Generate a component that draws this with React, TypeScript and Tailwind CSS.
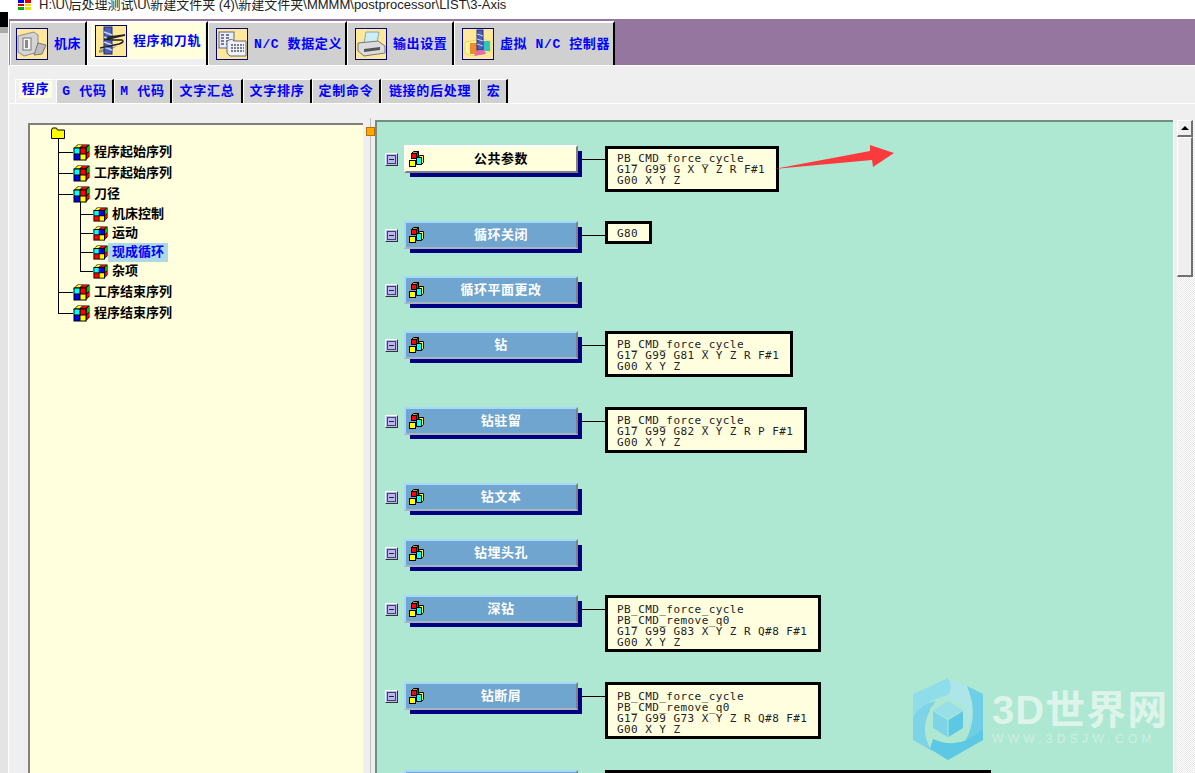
const cjk = "font-['Liberation_Mono','Noto_Sans_CJK_SC',monospace] font-bold text-[13px] leading-none"

const mainTabs = [
  { label: '机床', w: 'w-[77px]', pl: 'pl-[5px]', icon: 'machine' },
  { label: '程序和刀轨', w: 'w-[121px]', pl: 'pl-[3px]', icon: 'tool', active: true },
  { label: 'N/C 数据定义', w: 'w-[139px]', pl: 'pl-[7px]', icon: 'data' },
  { label: '输出设置', w: 'w-[107px]', pl: 'pl-[7px]', icon: 'printer' },
  { label: '虚拟 N/C 控制器', w: 'w-[161px]', pl: 'pl-[7px]', icon: 'sim' },
]

const subTabs = [
  { label: '程序', w: 'w-[41px]', active: true },
  { label: 'G 代码', w: 'w-[58px]' },
  { label: 'M 代码', w: 'w-[58px]' },
  { label: '文字汇总', w: 'w-[71px]' },
  { label: '文字排序', w: 'w-[69px]' },
  { label: '定制命令', w: 'w-[69px]' },
  { label: '链接的后处理', w: 'w-[99px]' },
  { label: '宏', w: 'w-[28px]' },
]

const rows = [
  { label: '公共参数', h: 'h-[76px]', light: true, box: 'mt-px pt-[4px] pb-[3px]', code: ['PB_CMD_force_cycle', 'G17 G99 G X Y Z R F#1', 'G00 X Y Z'] },
  { label: '循环关闭', h: 'h-[55px]', box: 'pt-[4px] pb-[2px]', code: ['G80'] },
  { label: '循环平面更改', h: 'h-[55px]' },
  { label: '钻', h: 'h-[76px]', box: 'pt-[5px] pb-[2px]', code: ['PB_CMD_force_cycle', 'G17 G99 G81 X Y Z R F#1', 'G00 X Y Z'] },
  { label: '钻驻留', h: 'h-[76px]', box: 'pt-[5px] pb-[2px]', code: ['PB_CMD_force_cycle', 'G17 G99 G82 X Y Z R P F#1', 'G00 X Y Z'] },
  { label: '钻文本', h: 'h-[56px]' },
  { label: '钻埋头孔', h: 'h-[56px]' },
  { label: '深钻', h: 'h-[87px]', box: 'pt-[6px] pb-px', code: ['PB_CMD_force_cycle', 'PB_CMD_remove_q0', 'G17 G99 G83 X Y Z R Q#8 F#1', 'G00 X Y Z'] },
  { label: '钻断屑', h: 'h-[88px]', box: 'pt-[6px] pb-px', code: ['PB_CMD_force_cycle', 'PB_CMD_remove_q0', 'G17 G99 G73 X Y Z R Q#8 F#1', 'G00 X Y Z'] },
  { label: '镗', h: 'h-[60px]', box: 'pt-[6px] pb-px', code: ['PB_CMD_force_cycle', 'PB_CMD_remove_q0', 'G17 G99 G85 X Y Z R Q#8 F#1 G00 X Y Z PB_CMD_remove'] },
]

function TabIcon({ kind }: { kind: string }) {
  return (
    <svg width="32" height="32" viewBox="0 0 32 32" className="shrink-0">
      <rect x="0.5" y="0.5" width="31" height="31" fill="#ffe89a" stroke="#000080" />
      {kind === 'machine' && (
        <g>
          <path d="M2 8 L18 4 L22 7 V24 L8 28 L2 24Z" fill="#d4d4d4" stroke="#8c8c8c" />
          <rect x="7" y="10" width="8" height="12" fill="#f4f4f4" stroke="#777" />
          <rect x="9" y="12" width="3" height="8" fill="#8a8a8a" />
          <path d="M22 15 L30 17 L26 26 L18 27Z" fill="#bdbdbd" stroke="#777" />
        </g>
      )}
      {kind === 'tool' && (
        <g>
          <path d="M4 25 L22 21 L14 26 L4 28Z" fill="#9a9a78" />
          <rect x="9" y="2" width="8" height="27" fill="#4d5ec0" stroke="#1d2b6b" />
          <path d="M9 7 L17 10 M9 12 L17 15 M9 17 L17 20 M9 22 L17 25" stroke="#c8d0f0" strokeWidth="1.5" />
          <path d="M9 15 L30 10" stroke="#222" strokeWidth="1.5" fill="none" />
          <path d="M30 10 L14 12 Q10 14 16 15 L27 15 Q30 17 24 19 L5 23" stroke="#222" strokeWidth="1.5" fill="none" />
        </g>
      )}
      {kind === 'data' && (
        <g>
          <rect x="3" y="4" width="15" height="16" fill="#e8eefc" stroke="#667" />
          <path d="M5 7h3M10 7h3M5 10h3M10 10h3M5 13h3M10 13h3M5 16h3M10 16h3" stroke="#556" strokeWidth="1.5" />
          <path d="M11 13 Q16 10 18 13 L30 13 V28 L14 28 Q11 26 11 24Z" fill="#f0f2fa" stroke="#667" />
          <path d="M15 17h13M15 20h13M15 23h13" stroke="#556" strokeWidth="1.5" strokeDasharray="2 1" />
        </g>
      )}
      {kind === 'printer' && (
        <g>
          <path d="M11 4 L24 4 L22 15 L9 15Z" fill="#cdeef4" stroke="#8aa" />
          <path d="M3 15 L23 13 L30 18 V25 L9 28 L3 23Z" fill="#dcdcdc" stroke="#777" />
          <path d="M9 21 L25 19 V22 L9 24Z" fill="#555" />
        </g>
      )}
      {kind === 'sim' && (
        <g>
          <path d="M3 14 L22 11 L29 14 V23 L10 28 L3 25Z" fill="#fff59a" stroke="#e8d860" />
          <rect x="20" y="13" width="8" height="10" fill="#30c4c0" />
          <rect x="8" y="15" width="8" height="11" fill="#f08a30" />
          <rect x="15" y="2" width="6" height="20" fill="#4d5ec0" stroke="#23307c" />
          <path d="M15 6 L21 8 M15 11 L21 13 M15 16 L21 18" stroke="#c8d0f0" />
          <path d="M14 23 L22 22 L24 26 L12 28Z" fill="#e868b0" />
        </g>
      )}
    </svg>
  )
}

function RubikIcon({ small }: { small?: boolean }) {
  const c = small
    ? ['#00ffff', '#0000ff', '#ff0000', '#ffff00']
    : ['#00ffff', '#ff0000', '#0000ff', '#ffff00']
  return (
    <svg width={small ? 15 : 17} height={small ? 15 : 17} viewBox="0 0 17 17" className="shrink-0">
      <path d="M0.5 4.5 L4.5 0.5 H16.5 V12.5 L12.5 16.5" fill="#000" />
      <path d="M2 3.5 L5 1 H9 L6.5 3.5Z" fill="#ffff00" />
      <path d="M7.5 3.5 L10 1 H15 L12.5 3.5Z" fill="#ff0000" />
      <path d="M13.5 4 L16 1.5 V7 L13.5 9Z" fill="#00c000" />
      <path d="M13.5 10 L16 8 V12 L13.5 15Z" fill="#ff0000" />
      <rect x="0.5" y="3.5" width="13" height="13" fill="#000" />
      <rect x="1.5" y="4.5" width="5" height="5" fill={c[0]} />
      <rect x="7.5" y="4.5" width="5" height="5" fill={c[1]} />
      <rect x="1.5" y="10.5" width="5" height="5" fill={c[2]} />
      <rect x="7.5" y="10.5" width="5" height="5" fill={c[3]} />
    </svg>
  )
}

function CubesIcon() {
  return (
    <svg width="16" height="16" viewBox="0 0 16 16" className="shrink-0">
      <path d="M3.5 2.5 L5.5 0.5 H10.5 L8.5 2.5Z" fill="#c8a000" stroke="#000" />
      <path d="M8.5 2.5 L10.5 0.5 V5.5 L8.5 7.5Z" fill="#008000" stroke="#000" />
      <rect x="3.5" y="2.5" width="5" height="5" fill="#ff0000" stroke="#000" />
      <path d="M8.5 6.5 H13.5 V13.5 H8.5Z" fill="#00ffff" stroke="#000" />
      <path d="M10.5 6.5 L11.5 4.5 H15.5 V11.5 L13.5 13.5 V6.5Z" fill="#ffff00" stroke="#000" />
      <rect x="1.5" y="9.5" width="6" height="6" fill="#ffff00" stroke="#000" />
    </svg>
  )
}

function TreeRow({ label, small, selected }: { label: string; small?: boolean; selected?: boolean }) {
  return (
    <li className={small ? 'flex items-center h-[19px]' : 'flex items-center h-[21px]'}>
      <div className={small ? 'w-[13px] h-px bg-black' : 'w-[15px] h-px bg-black'} />
      <RubikIcon small={small} />
      <span
        className={
          selected
            ? `${cjk} px-[4px] h-[19px] flex items-center bg-[#add8e6] text-[#0000ff]`
            : `${cjk} ml-[4px] text-black`
        }
      >
        {label}
      </span>
    </li>
  )
}

function Tree() {
  return (
    <div className="relative ml-[21px] pt-[2px]">
      <svg width="14" height="12" viewBox="0 0 14 12" className="block">
        <path d="M0.5 3 L1.5 1 H5.5 L6.5 3 H13.5 V11.5 H0.5Z" fill="#ffff00" stroke="#000" />
      </svg>
      <div className="absolute left-[7px] top-[13px] h-[175px] w-px bg-black" />
      <ul className="ml-[7px] pt-[3px]">
        <TreeRow label="程序起始序列" />
        <TreeRow label="工序起始序列" />
        <TreeRow label="刀径" />
        <li className="relative ml-[22px] pb-px">
          <div className="absolute left-0 top-[-3px] h-[69px] w-px bg-black" />
          <ul>
            <TreeRow small label="机床控制" />
            <TreeRow small label="运动" />
            <TreeRow small selected label="现成循环" />
            <TreeRow small label="杂项" />
          </ul>
        </li>
        <TreeRow label="工序结束序列" />
        <TreeRow label="程序结束序列" />
      </ul>
    </div>
  )
}

function Row({ row }: { row: (typeof rows)[number] }) {
  return (
    <div className={`flex items-start pl-[8px] ${row.h}`}>
      <div className="mt-[8px] mr-[6px] w-[13px] h-[13px] flex items-center justify-center bg-[#b8b8ec] border border-t-white border-l-white border-r-[#333] border-b-[#333] shrink-0">
        <div className="w-[9px] h-[9px] flex items-center justify-center border border-[#404060]">
          <div className="w-[5px] h-px bg-[#202040]" />
        </div>
      </div>
      <div className="relative w-[174px] h-[28px] shrink-0">
        <div className="absolute left-[6px] top-[6px] right-[-4px] bottom-[-4px] bg-[#000080]" />
        <div
          className={
            row.light
              ? 'relative h-full flex items-center pl-[2px] bg-[#ffffdd] border-2 border-t-white border-l-white border-r-[#808080] border-b-[#808080]'
              : 'relative h-full flex items-center pl-[2px] bg-[#6fa5cf] border-2 border-t-[#a6d8f8] border-l-[#a6d8f8] border-r-[#808080] border-b-[#a9b4bc]'
          }
        >
          <CubesIcon />
          <span className={`flex-1 pl-[2px] text-center tracking-[0.5px] ${cjk} ${row.light ? 'text-black' : 'text-white'}`}>
            {row.label}
          </span>
        </div>
      </div>
      {row.code && (
        <>
          <div className="mt-[14px] ml-[4px] w-[23px] h-px bg-black shrink-0" />
          <div className={`${row.box} bg-[#ffffe0] border-[3px] border-black pl-[9px] pr-[11px] font-['DejaVu_Sans_Mono',monospace] text-[11px] tracking-[0.43px] leading-[11px] text-[#222] whitespace-pre shrink-0`}>
            {row.code.map((line, i) => (
              <div key={i}>{line}</div>
            ))}
          </div>
        </>
      )}
    </div>
  )
}

function Watermark() {
  return (
    <div className="absolute left-[912px] top-[677px] flex items-start pointer-events-none">
      <svg width="72" height="84" viewBox="0 0 72 84">
        <path d="M36 1 L54 9 Q66 30 55 52 Q48 20 20 16 Q24 8 36 1Z" fill="#ade5e8" />
        <path d="M36 1 L1 17 V50 Q4 26 36 18 Q42 10 36 1Z" fill="#8fdde8" />
        <path d="M55 9 L71 17 V63 L52 66 Q68 40 55 9Z" fill="#6ccfe6" />
        <path d="M1 20 V63 L20 74 Q4 50 24 24 Q10 26 1 40Z" fill="#7cd4e6" />
        <path d="M21 62 Q48 74 71 52 V63 L36 83 L18 72Z" fill="#5cc8e4" />
        <path d="M36 20 L54 31 V53 L36 64 L18 53 V31Z" fill="#aee8d2" />
        <path d="M36 24 L51 33 L36 42 L21 33Z" fill="#98dfe8" />
        <path d="M21 34 L35.5 43 V60 L21 51Z" fill="#7cd4e6" />
        <path d="M36.5 43 L51 34 V51 L36.5 60Z" fill="#5cc8e4" />
      </svg>
      <div className="ml-[8px] mt-[10px] flex flex-col font-['Liberation_Sans','Noto_Sans_CJK_SC',sans-serif] font-bold">
        <span className="text-[40px] leading-[46px] text-[#dcf4ea] tracking-[1px] whitespace-nowrap">3D世界网</span>
        <span className="text-[12px] leading-[12px] text-[#cdf0e2] tracking-[4.3px] whitespace-nowrap font-normal">WWW.3DSJW.COM</span>
      </div>
    </div>
  )
}

export default function App() {
  return (
    <div className="relative w-[1195px] h-[773px] overflow-hidden flex bg-[#efefef]">
      <div className="w-[9px] shrink-0 flex flex-col bg-[#e4e4e4] border-r border-white">
        <div className="h-[12px] bg-white" />
        <div className="h-[15px] bg-black" />
        <div className="h-[6px] bg-[#a8a8a8]" />
      </div>

      <div className="flex-1 flex flex-col min-w-0">
        <div className="h-[19px] shrink-0 bg-white flex items-start pl-[9px] overflow-hidden">
          <div className="w-[13px] h-[10px] grid grid-cols-2 gap-px shrink-0">
            <div className="bg-[#0000e0]" />
            <div className="bg-[#e00000]" />
            <div className="bg-[#e00000]" />
            <div className="bg-[#e8e000]" />
            <div className="bg-[#00b000]" />
            <div className="bg-[#e8e000]" />
          </div>
          <span className="ml-[8px] -mt-[3px] font-['Liberation_Sans','Noto_Sans_CJK_SC',sans-serif] text-[13px] leading-[16px] text-[#222] whitespace-nowrap">
            H:\U\后处理测试\U\新建文件夹 (4)\新建文件夹\MMMM\postprocessor\LIST\3-Axis
          </span>
        </div>

        <div className="h-[46px] shrink-0 bg-[#94769f] flex items-end pl-px">
          {mainTabs.map((tab) => (
            <div
              key={tab.label}
              className={`${tab.w} ${tab.pl} h-[44px] flex items-center border-t-2 border-l border-r-2 border-t-white border-l-white border-r-black ${tab.active ? 'bg-[#efefef]' : 'bg-[#d0d0d0]'}`}
            >
              {tab.active ? (
                <div className="flex items-center gap-[6px] bg-[#ffffdd] h-[36px] pl-[4px] w-[114px] -mt-[6px]">
                  <TabIcon kind={tab.icon} />
                  <span className={`${cjk} text-[#0000ff] tracking-[0.6px] whitespace-nowrap`}>{tab.label}</span>
                </div>
              ) : (
                <div className="flex items-center gap-[6px]">
                  <TabIcon kind={tab.icon} />
                  <span className={`${cjk} text-[#0000ff] tracking-[0.6px] whitespace-nowrap`}>{tab.label}</span>
                </div>
              )}
            </div>
          ))}
        </div>

        <div className="h-px shrink-0 bg-white" />

        <div className="shrink-0 flex items-end pl-[6px] pt-[14px] h-[38px] border-b border-white">
          {subTabs.map((tab) => (
            <div
              key={tab.label}
              className={`${tab.w} h-[24px] flex items-center justify-center border-t border-l border-r-2 border-t-white border-l-white ${tab.active ? 'bg-[#efefef] border-r-[#efefef]' : 'bg-[#d0d0d0] border-r-black'}`}
            >
              <span className={`${cjk} text-[#0000ff] tracking-[0.7px] whitespace-nowrap ${tab.active ? 'bg-[#ffffdd] px-[3px] py-[2px] -mt-[4px] ml-px' : ''}`}>
                {tab.label}
              </span>
            </div>
          ))}
        </div>

        <div className="flex-1 min-h-0 flex items-stretch pt-[16px] overflow-hidden">
          <div className="ml-[19px] mt-[3px] w-[335px] shrink-0 bg-[#ffffdd] border-t-2 border-l-2 border-t-[#808080] border-l-[#808080]">
            <Tree />
          </div>
          <div className="relative w-[12px] shrink-0 -mt-[2px]">
            <div className="absolute left-[7px] top-0 bottom-0 w-px bg-[#bdbdbd]" />
            <div className="absolute left-[3px] top-[9px] w-[9px] h-[9px] bg-[#ffa500] border border-[#b87000]" />
          </div>
          <div className="w-[798px] shrink-0 bg-[#aee8d2] border-t-2 border-l-2 border-t-[#6f8f85] border-l-[#6f8f85] pt-[23px] overflow-hidden">
            {rows.map((row) => (
              <Row key={row.label} row={row} />
            ))}
          </div>
          <div className="w-px shrink-0 bg-white" />
          <div className="w-[3px] shrink-0" />
          <div className="w-[18px] shrink-0 flex flex-col bg-[repeating-conic-gradient(#e8e8e8_0_25%,#ffffff_0_50%)] bg-[length:2px_2px]">
            <div className="w-[16px] h-[17px] bg-[#efefef] border-t border-l border-r-2 border-b-2 border-t-white border-l-white border-r-[#707070] border-b-[#707070] flex items-center justify-center">
              <div className="w-0 h-0 border-l-[4px] border-r-[4px] border-b-[4px] border-l-transparent border-r-transparent border-b-black" />
            </div>
            <div className="w-[16px] h-[140px] bg-[#efefef] border-t border-l border-r-2 border-b-2 border-t-white border-l-white border-r-[#707070] border-b-[#707070]" />
          </div>
        </div>
      </div>

      <svg width="130" height="35" viewBox="0 0 130 35" className="absolute left-[770px] top-[140px]">
        <path d="M4 29 L100 11 L100 5 L124 13 L103 27 L102 20Z" fill="#fb3a3e" />
      </svg>
      <Watermark />
    </div>
  )
}
